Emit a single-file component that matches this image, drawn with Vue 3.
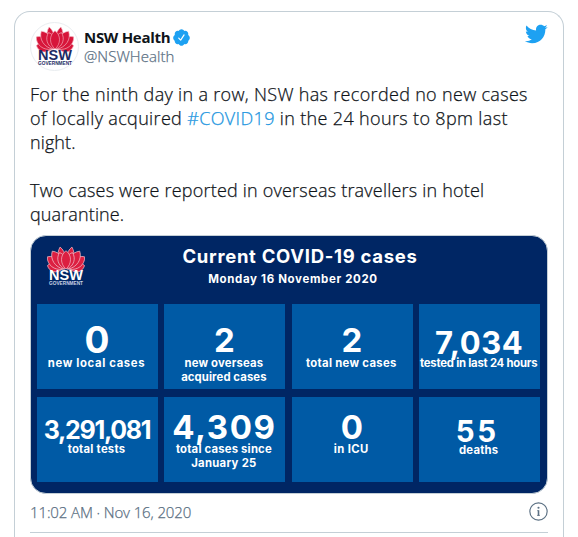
<template>
  <article class="tweet">
    <header class="tweet-header">
      <div class="avatar">
        <svg class="avatar-logo" viewBox="0 0 38 40">
          <g transform="translate(19 23.2)" fill="#d7153a" stroke="#f3b5c1" stroke-width="0.6">
            <path v-for="p in petals" :d="p.d" :transform="p.transform" />
          </g>
          <text class="logo-name" x="2" y="34" textLength="34" fill="#1d2b63">NSW</text>
          <text class="logo-gov" x="2" y="39.2" textLength="34" lengthAdjust="spacingAndGlyphs" fill="#1d2b63">GOVERNMENT</text>
        </svg>
      </div>
      <div class="author">
        <div class="author-name">
          <span>NSW Health</span>
          <svg class="verified" viewBox="0 0 24 24">
            <path fill="#1da1f2" d="M22.5 12.5c0-1.58-.875-2.95-2.148-3.6.154-.435.238-.905.238-1.4 0-2.21-1.71-3.998-3.818-3.998-.47 0-.92.084-1.336.25C14.818 2.415 13.51 1.5 12 1.5s-2.816.917-3.437 2.25c-.415-.165-.866-.25-1.336-.25-2.11 0-3.818 1.79-3.818 4 0 .494.083.964.237 1.4-1.272.65-2.147 2.018-2.147 3.6 0 1.495.782 2.798 1.942 3.486-.02.17-.032.34-.032.514 0 2.21 1.708 4 3.818 4 .47 0 .92-.086 1.335-.25.62 1.334 1.926 2.25 3.437 2.25 1.512 0 2.818-.916 3.437-2.25.415.163.865.248 1.336.248 2.11 0 3.818-1.79 3.818-4 0-.174-.012-.344-.033-.513 1.158-.687 1.943-1.99 1.943-3.484zm-6.616-3.334l-4.334 6.5c-.145.217-.382.334-.625.334-.143 0-.288-.04-.416-.126l-.115-.094-2.415-2.415c-.293-.293-.293-.768 0-1.06s.768-.294 1.06 0l1.77 1.767 3.825-5.74c.23-.345.696-.436 1.04-.207.346.23.44.696.21 1.04z" />
          </svg>
        </div>
        <div class="author-handle">@NSWHealth</div>
      </div>
      <svg class="bird" viewBox="0 0 24 24">
        <path fill="#1da1f2" d="M23.643 4.937c-.835.37-1.732.62-2.675.733.962-.576 1.7-1.49 2.048-2.578-.9.534-1.897.922-2.958 1.13-.85-.904-2.06-1.47-3.4-1.47-2.572 0-4.658 2.086-4.658 4.66 0 .364.042.718.12 1.06-3.873-.195-7.304-2.05-9.602-4.868-.4.69-.63 1.49-.63 2.342 0 1.616.823 3.043 2.072 3.878-.764-.025-1.482-.234-2.11-.583v.06c0 2.257 1.605 4.14 3.737 4.568-.392.106-.803.162-1.227.162-.3 0-.593-.028-.877-.082.593 1.85 2.313 3.198 4.352 3.234-1.595 1.25-3.604 1.995-5.786 1.995-.376 0-.747-.022-1.112-.065 2.062 1.323 4.51 2.093 7.14 2.093 8.57 0 13.255-7.098 13.255-13.254 0-.2-.005-.402-.014-.602.91-.658 1.7-1.477 2.323-2.41z" />
      </svg>
    </header>

    <div class="tweet-text">
      <div class="l1">For the ninth day in a row, NSW has recorded no new cases</div>
      <div class="l2">of locally acquired <a class="hashtag">#COVID19</a> in the 24 hours to 8pm last</div>
      <div class="l3">night.</div>
      <br />
      <div class="l4">Two cases were reported in overseas travellers in hotel</div>
      <div class="l5">quarantine.</div>
    </div>

    <section class="media">
      <div class="media-header">
        <svg class="media-logo" viewBox="0 0 38 40">
          <g transform="translate(19 23.2)" fill="#dc1f41" stroke="#f0bcc8" stroke-width="0.7">
            <path v-for="p in petals" :d="p.d" :transform="p.transform" />
          </g>
          <text class="logo-name" x="2" y="34" textLength="34" fill="#fff">NSW</text>
          <text class="logo-gov" x="2" y="39.2" textLength="34" lengthAdjust="spacingAndGlyphs" fill="#c9d2e4">GOVERNMENT</text>
        </svg>
        <div class="media-titles">
          <h1>Current COVID-19 cases</h1>
          <h2>Monday 16 November 2020</h2>
        </div>
      </div>
      <div class="tiles">
        <div v-for="tile in tiles" class="tile">
          <div class="tile-value" :style="valueStyle(tile)">{{ tile.value }}</div>
          <div
            v-for="line in tile.lines"
            class="tile-label"
            :style="{ letterSpacing: line.spacing + 'px' }"
          >{{ line.text }}</div>
        </div>
      </div>
    </section>

    <footer class="tweet-footer">
      <span class="date">11:02 AM · Nov 16, 2020</span>
      <svg class="info" viewBox="0 0 18 18">
        <circle cx="9" cy="9" r="8.2" fill="none" stroke="#5b7083" stroke-width="1.1" />
        <path d="M9 7.8v5.2" fill="none" stroke="#5b7083" stroke-width="1.5" />
        <path d="M7.9 8.2h1M7.7 12.7h2.6" fill="none" stroke="#5b7083" stroke-width="0.8" />
        <circle cx="9" cy="5.4" r="1" fill="#5b7083" />
      </svg>
    </footer>
  </article>
</template>

<script setup>
// back petals first, the centre one is drawn last
const petals = [
  [-4, -76, 15, 6],
  [4, 76, 15, 6],
  [-3, -52, 20, 6.5],
  [3, 52, 20, 6.5],
  [-2, -10, 22.5, 5],
  [2, 10, 22.5, 5],
  [-2, -33, 21.5, 6.5],
  [2, 33, 21.5, 6.5],
  [-1, -18, 17.5, 5.5],
  [1, 18, 17.5, 5.5],
  [0, 0, 18.5, 6],
].map(([x, angle, len, w]) => ({
  transform: `translate(${x}) rotate(${angle})`,
  d: `M0 0C${-w} ${-len * 0.3} ${-w} ${-len * 0.75} 0 ${-len}C${w} ${-len * 0.75} ${w} ${-len * 0.3} 0 0Z`,
}));

// base: baseline of the value, top: where the label starts, both from the tile's top
const tiles = [
  { value: "0", size: 37, base: 49, top: 52, spacing: 0, lines: [{ text: "new local cases", spacing: 0.65 }] },
  {
    value: "2",
    size: 33,
    base: 49,
    top: 52,
    spacing: 0,
    lines: [{ text: "new overseas", spacing: 0.2 }, { text: "acquired cases", spacing: 0.1 }],
  },
  { value: "2", size: 33, base: 49, top: 52, spacing: 0, lines: [{ text: "total new cases", spacing: 0.3 }] },
  { value: "7,034", size: 31, base: 50, top: 52, spacing: 0.6, lines: [{ text: "tested in last 24 hours", spacing: -0.22 }] },
  { value: "3,291,081", size: 25, base: 43, top: 45, spacing: -1.3, lines: [{ text: "total tests", spacing: 0.25 }] },
  {
    value: "4,309",
    size: 33,
    base: 43,
    top: 45,
    spacing: 1.6,
    lines: [{ text: "total cases since", spacing: 0.2 }, { text: "January 25", spacing: 0.3 }],
  },
  { value: "0", size: 33, base: 43, top: 45, spacing: 0, lines: [{ text: "in ICU", spacing: 0.4 }] },
  { value: "55", size: 29.5, base: 45, top: 46, spacing: 2.5, shift: 5, lines: [{ text: "deaths", spacing: 0.2 }] },
];

function valueStyle(tile) {
  return {
    fontSize: `${tile.size}px`,
    height: `${tile.top}px`,
    lineHeight: `${tile.base * 2 - tile.size * 0.728}px`,
    letterSpacing: `${tile.spacing}px`,
    paddingRight: `${tile.shift || 1}px`,
  };
}
</script>

<style>
html,
body {
  background: #fff;
  overflow: hidden;
}
</style>

<style scoped>
.tweet {
  box-sizing: border-box;
  width: 550px;
  height: 526px;
  margin: 11px 0 0 14px;
  padding: 10px 15px 0;
  border: 1px solid #c4cfd6;
  border-bottom: none;
  border-radius: 16px 16px 0 0;
  font-family: "Open Sans", "Noto Sans", sans-serif;
  color: #0f1419;
}

.tweet-header {
  display: flex;
  align-items: flex-start;
  height: 60px;
}

.avatar {
  box-sizing: border-box;
  width: 49px;
  height: 49px;
  border: 1px solid #e9edf0;
  border-radius: 50%;
  padding: 3px 0 0 5px;
}

.avatar-logo,
.media-logo {
  display: block;
  width: 38px;
  height: 40px;
}

.logo-name {
  font: bold 14.5px "Liberation Sans", sans-serif;
}

.logo-gov {
  font: bold 4.6px "Liberation Sans", sans-serif;
}

.author {
  flex: 1;
  padding: 5px 0 0 5px;
}

.author-name {
  display: flex;
  align-items: center;
  font-size: 15px;
  font-weight: 700;
  line-height: 20px;
  letter-spacing: -0.3px;
}

.verified {
  width: 19px;
  height: 19px;
  margin-left: 2px;
}

.author-handle,
.tweet-text,
.date {
  font-weight: 300;
  -webkit-text-stroke: 0.25px currentColor;
}

.author-handle {
  font-size: 15px;
  line-height: 19px;
  letter-spacing: 0.05px;
  color: #5b7083;
}

.bird {
  width: 24px;
  height: 24px;
}

.tweet-text {
  font-size: 18px;
  line-height: 24px;
  white-space: nowrap;
  height: 153px;
}

.l1 {
  letter-spacing: 0.32px;
}

.l2 {
  letter-spacing: 0.35px;
}

.l3 {
  letter-spacing: 0.1px;
}

.l4 {
  letter-spacing: 0.2px;
}

.l5 {
  letter-spacing: 0.12px;
}

.hashtag {
  color: #1b95e0;
}

.media {
  box-sizing: border-box;
  width: 518px;
  height: 259px;
  border: 1px solid #c4cfd6;
  border-radius: 16px;
  background: #002664;
  color: #fff;
  font-family: "Inter", sans-serif;
  font-weight: 700;
  overflow: hidden;
}

.media-header {
  display: flex;
  height: 68px;
}

.media-logo {
  margin: 10px 0 0 16px;
}

.media-titles {
  width: 430px;
  text-align: center;
}

h1 {
  margin: 8px 0 0;
  font-size: 18.5px;
  line-height: 24px;
  letter-spacing: 0.7px;
}

h2 {
  margin: 2px 14px 0 0;
  font-size: 11.5px;
  line-height: 18px;
  letter-spacing: 0.65px;
}

.tiles {
  display: grid;
  grid-template-columns: repeat(4, 121px);
  grid-auto-rows: 85px;
  gap: 8px 6.4px;
  padding-left: 6px;
}

.tile {
  background: #005aa5;
  text-align: center;
  white-space: nowrap;
}

.tile-value {
  box-sizing: border-box;
}

.tile-label {
  margin-right: 2px;
  font-size: 11.3px;
  line-height: 14px;
}

.tweet-footer {
  display: flex;
  align-items: center;
  justify-content: space-between;
  box-sizing: border-box;
  width: 518px;
  height: 39px;
  padding-bottom: 3px;
  border-bottom: 1px solid #c4cfd6;
}

.date {
  font-size: 15px;
  letter-spacing: -0.12px;
  color: #5b7083;
}

.info {
  width: 19px;
  height: 19px;
}
</style>
